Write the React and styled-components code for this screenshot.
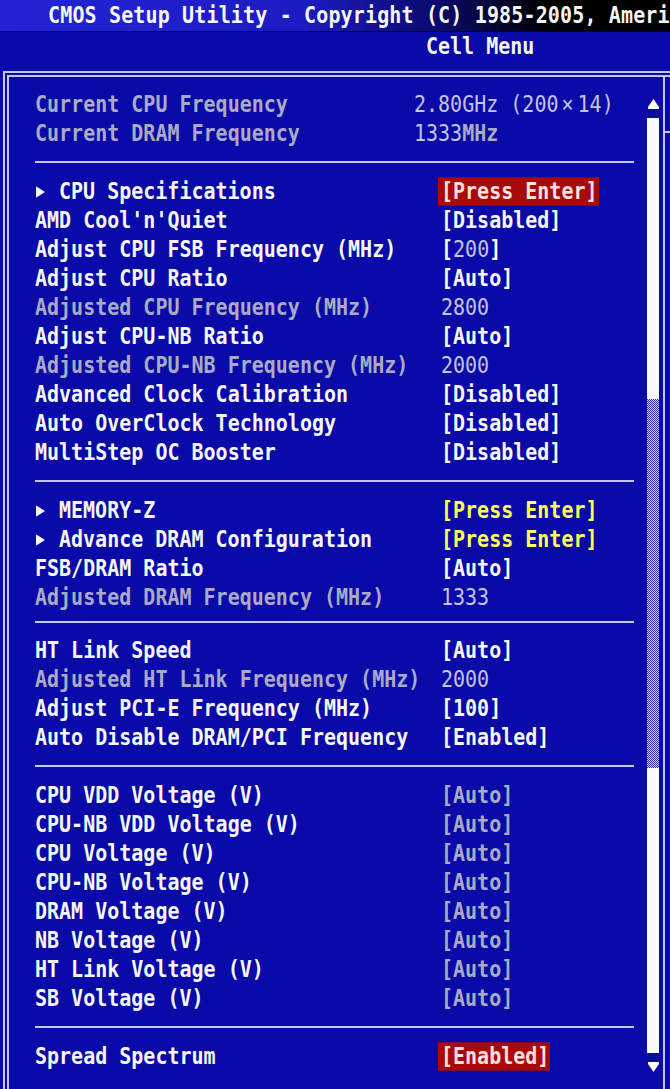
import React from "react";
import styled, { createGlobalStyle, css } from "styled-components";

const GlobalStyle = createGlobalStyle`
  html, body {
    margin: 0;
    padding: 0;
    background: #0a0aa8;
  }
`;

const tall = css`
  display: inline-block;
  transform: scaleY(1.14);
  transform-origin: 50% 50%;
`;

const Screen = styled.div`
  width: 670px;
  height: 1089px;
  overflow: hidden;
  background: #0a0aa8;
  color: #f6f6f6;
  font-family: "DejaVu Sans Mono", "Liberation Mono", monospace;
  font-size: 20px;
  font-weight: bold;
  display: flex;
  flex-direction: column;
`;

const TitleBar = styled.div`
  flex: none;
  height: 31px;
  line-height: 31px;
  padding-left: 48px;
  white-space: nowrap;
  letter-spacing: 0.15px;
  border-bottom: 1px solid #000050;
  background: linear-gradient(90deg, #2323d4 0px, #1c1cc4 300px, #0a0a6a 440px, #000 545px);

  & > span {
    ${tall}
  }
`;

const SubHeader = styled.div`
  flex: none;
  height: 39px;
  line-height: 28px;
  padding-left: 426px;

  & > span {
    ${tall}
  }
`;

const Panel = styled.div`
  flex: none;
  width: 720px;
  height: 1016px;
  margin-left: 3px;
  border: 6px double #c4c4f6;
  display: flex;
`;

const Main = styled.div`
  width: 654px;
  display: flex;
`;

const List = styled.div`
  width: 599px;
  padding: 13px 0 0 26px;
  display: flex;
  flex-direction: column;
`;

const Row = styled.div`
  height: 29px;
  line-height: 29px;
  display: grid;
  grid-template-columns: ${(p) => p.$split || 406}px 1fr;
  align-items: center;
  white-space: nowrap;
`;

const Label = styled.span`
  ${tall}
  color: ${(p) => (p.$muted ? "#aaaac6" : "#f6f6f6")};
`;

const Arrow = styled.span`
  display: inline-block;
  width: 24px;
  height: 29px;
  vertical-align: top;

  svg {
    display: block;
    margin-top: 10px;
    margin-left: 1px;
  }
`;

const toneColors = {
  white: "#f6f6f6",
  muted: "#aaaac6",
  yellow: "#ffff5c",
};

const Value = styled.span`
  ${tall}
  justify-self: start;
  color: ${(p) => toneColors[p.$tone || "white"]};
  ${(p) =>
    p.$selected &&
    css`
      height: 25px;
      line-height: 25px;
      margin-left: -3px;
      padding: 0 1px 0 3px;
      background: #a80a0a;
      color: #ffe0e0;
    `}
`;

const Thin = styled.span`
  font-weight: normal;
  color: #c4c4e4;
`;

const Times = styled.span`
  padding: 0 4px 0 3px;
`;

const Separator = styled.div`
  flex: none;
  padding: ${(p) => (p.$tight ? "9px 0 13px" : "13px 0 14px")};

  &::before {
    content: "";
    display: block;
    height: 2px;
    background: #c4c4f6;
  }
`;

const Scrollbar = styled.div`
  width: 12px;
  margin-left: 13px;
  padding: 22px 0 21px;
  display: flex;
  flex-direction: column;
  align-items: center;
  gap: 9px;
`;

const Track = styled.div`
  flex: 1;
  width: 12px;
  display: flex;
  flex-direction: column;
`;

const TrackPart = styled.div`
  flex: ${(p) => p.$grow};
  background: ${(p) =>
    p.$hatched
      ? "repeating-conic-gradient(#d8d8f0 0 25%, #2a2ab4 0 50%) 0 0 / 2px 2px"
      : "#fafafa"};
`;

const Divider = styled.div`
  width: 2px;
  flex: none;
  background: #c4c4f6;
`;

const HelpPane = styled.div`
  flex: 1;
  display: flex;
  flex-direction: column;
`;

const HelpHead = styled.div`
  height: 54px;
  border-bottom: 2px solid #c4c4f6;
`;

const RightTri = () => (
  <svg width="9" height="10" viewBox="0 0 9 10">
    <path d="M0 0 L9 5 L0 10 Z" fill="#f6f6f6" />
  </svg>
);

const UpArrow = () => (
  <svg width="11" height="10" viewBox="0 0 11 10">
    <path d="M5.5 0 L11 8 L11 10 L0 10 L0 8 Z" fill="#ffffff" />
  </svg>
);

const DownArrow = () => (
  <svg width="11" height="10" viewBox="0 0 11 10">
    <path d="M0 0 L11 0 L11 2 L5.5 10 L0 2 Z" fill="#ffffff" />
  </svg>
);

const Item = ({ label, muted, sub, split, children }) => (
  <Row $split={split}>
    <Label $muted={muted}>
      {sub && (
        <Arrow>
          <RightTri />
        </Arrow>
      )}
      {label}
    </Label>
    {children}
  </Row>
);

const voltages = [
  "CPU VDD Voltage (V)",
  "CPU-NB VDD Voltage (V)",
  "CPU Voltage (V)",
  "CPU-NB Voltage (V)",
  "DRAM Voltage (V)",
  "NB Voltage (V)",
  "HT Link Voltage (V)",
  "SB Voltage (V)",
];

export default function App() {
  return (
    <Screen>
      <GlobalStyle />
      <TitleBar>
        <span>CMOS Setup Utility - Copyright (C) 1985-2005, Ameri</span>
      </TitleBar>
      <SubHeader>
        <span>Cell Menu</span>
      </SubHeader>
      <Panel>
        <Main>
          <List>
            <Item label="Current CPU Frequency" muted split={379}>
              <Value>
                <Thin>
                  2.80GHz (200<Times>×</Times>14)
                </Thin>
              </Value>
            </Item>
            <Item label="Current DRAM Frequency" muted split={379}>
              <Value $tone="muted">
                <Thin>1333</Thin>MHz
              </Value>
            </Item>
            <Separator />

            <Item label="CPU Specifications" sub>
              <Value $selected>[Press Enter]</Value>
            </Item>
            <Item label="AMD Cool'n'Quiet">
              <Value>[Disabled]</Value>
            </Item>
            <Item label="Adjust CPU FSB Frequency (MHz)">
              <Value>
                [<Thin>200</Thin>]
              </Value>
            </Item>
            <Item label="Adjust CPU Ratio">
              <Value>[Auto]</Value>
            </Item>
            <Item label="Adjusted CPU Frequency (MHz)" muted>
              <Value>
                <Thin>2800</Thin>
              </Value>
            </Item>
            <Item label="Adjust CPU-NB Ratio">
              <Value>[Auto]</Value>
            </Item>
            <Item label="Adjusted CPU-NB Frequency (MHz)" muted>
              <Value>
                <Thin>2000</Thin>
              </Value>
            </Item>
            <Item label="Advanced Clock Calibration">
              <Value>[Disabled]</Value>
            </Item>
            <Item label="Auto OverClock Technology">
              <Value>[Disabled]</Value>
            </Item>
            <Item label="MultiStep OC Booster">
              <Value>[Disabled]</Value>
            </Item>
            <Separator />

            <Item label="MEMORY-Z" sub>
              <Value $tone="yellow">[Press Enter]</Value>
            </Item>
            <Item label="Advance DRAM Configuration" sub>
              <Value $tone="yellow">[Press Enter]</Value>
            </Item>
            <Item label="FSB/DRAM Ratio">
              <Value>[Auto]</Value>
            </Item>
            <Item label="Adjusted DRAM Frequency (MHz)" muted>
              <Value>
                <Thin>1333</Thin>
              </Value>
            </Item>
            <Separator $tight />

            <Item label="HT Link Speed">
              <Value>[Auto]</Value>
            </Item>
            <Item label="Adjusted HT Link Frequency (MHz)" muted>
              <Value>
                <Thin>2000</Thin>
              </Value>
            </Item>
            <Item label="Adjust PCI-E Frequency (MHz)">
              <Value>[100]</Value>
            </Item>
            <Item label="Auto Disable DRAM/PCI Frequency">
              <Value>[Enabled]</Value>
            </Item>
            <Separator />

            {voltages.map((v) => (
              <Item key={v} label={v}>
                <Value $tone="muted">[Auto]</Value>
              </Item>
            ))}
            <Separator />

            <Item label="Spread Spectrum">
              <Value $selected>[Enabled]</Value>
            </Item>
          </List>
          <Scrollbar>
            <UpArrow />
            <Track>
              <TrackPart $grow={277} />
              <TrackPart $grow={365} $hatched />
              <TrackPart $grow={281} />
            </Track>
            <DownArrow />
          </Scrollbar>
        </Main>
        <Divider />
        <HelpPane>
          <HelpHead />
        </HelpPane>
      </Panel>
    </Screen>
  );
}
